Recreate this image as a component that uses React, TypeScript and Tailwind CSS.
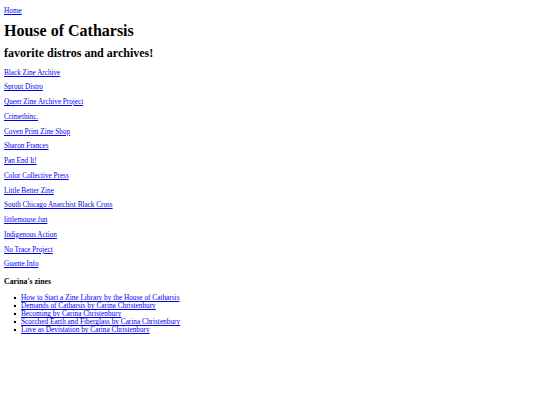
import React from "react";

const links = [
  "Black Zine Archive",
  "Sprout Distro",
  "Queer Zine Archive Project",
  "Crimethinc.",
  "Coven Print Zine Shop",
  "Sharon Frances",
  "Pan End It!",
  "Color Collective Press",
  "Little Better Zine",
  "South Chicago Anarchist Black Cross",
  "littlemouse.fun",
  "Indigenous Action",
  "No Trace Project",
  "Guante.Info",
];

const zines = [
  "How to Start a Zine Library by the House of Catharsis",
  "Demands of Catharsis by Carina Christenbury",
  "Becoming by Carina Christenbury",
  "Scorched Earth and Fiberglass by Carina Christenbury",
  "Love as Devistation by Carina Christenbury",
];

export default function App() {
  return (
    <div
      className="min-h-[405px] w-[540px] bg-white pl-[4px] text-black"
      style={{ fontFamily: '"Liberation Serif", serif' }}
    >
      <div className="flex flex-col items-start">
        <a href="#" className="mt-[7px] text-[7.3px] leading-[8px] text-[#0000ee] underline">
          Home
        </a>
        <h1 className="mt-[6px] text-[16px] font-bold leading-[20px]">House of Catharsis</h1>
        <h2 className="mt-[5px] text-[12px] font-bold leading-[14px]">favorite distros and archives!</h2>
        <div className="mt-[8.5px] flex flex-col items-start gap-[6.77px]">
          {links.map((l) => (
            <a key={l} href="#" className="text-[7.2px] leading-[8px] text-[#0000ee] underline">
              {l}
            </a>
          ))}
        </div>
        <h3 className="mt-[8.5px] text-[7.8px] font-bold leading-[9px]">Carina's zines</h3>
        <ul className="mt-[8.5px] flex flex-col pl-[10px] text-[7.3px] leading-[8px]">
          {zines.map((z) => (
            <li key={z} className="flex items-center">
              <span className="mr-[5px] h-[2px] w-[2px] shrink-0 bg-black" />
              <a href="#" className="text-[#0000ee] underline">
                {z}
              </a>
            </li>
          ))}
        </ul>
      </div>
    </div>
  );
}
